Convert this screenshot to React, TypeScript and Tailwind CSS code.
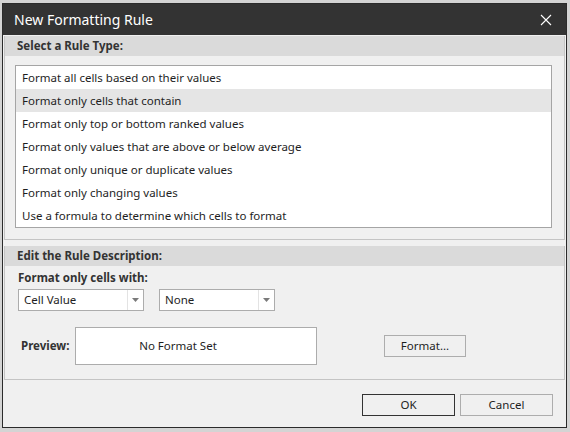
import React from 'react';

const RULE_TYPES = [
  'Format all cells based on their values',
  'Format only cells that contain',
  'Format only top or bottom ranked values',
  'Format only values that are above or below average',
  'Format only unique or duplicate values',
  'Format only changing values',
  'Use a formula to determine which cells to format',
];

const font = { fontFamily: '"Segoe UI", "Noto Sans", "Open Sans", sans-serif' };

const Dropdown: React.FC<{ value: string; width: string }> = ({ value, width }) => (
  <div className={`flex h-[22px] ${width} border border-[#acacac] bg-white`}>
    <div className="flex-1 pl-[5px] text-[11.5px] leading-[20px] text-[#1e1e1e]">{value}</div>
    <div className="flex w-[16px] items-center justify-center border-l border-[#e3e3e3]">
      <svg width="7" height="4" viewBox="0 0 7 4">
        <path d="M0 0h7L3.5 4z" fill="#7a7a7a" />
      </svg>
    </div>
  </div>
);

const SectionHeader: React.FC<{ label: string }> = ({ label }) => (
  <div className="h-[20px] bg-[#dadada] pl-[12px] text-[11.5px] font-bold leading-[20px] text-[#333]">
    {label}
  </div>
);

export default function App() {
  const selected = 1;
  return (
    <div className="h-[432px] w-[570px] overflow-hidden bg-[#d4d4d4] pl-[2px] pt-[3px]" style={font}>
      <div className="flex h-[425px] w-[565px] flex-col border border-[#2b2b2b] bg-[#f0f0f0]">
        {/* title bar */}
        <div className="flex h-[31px] items-center justify-between bg-[#333333] pl-[11px] pr-[14px]">
          <span className="text-[14px] text-white">New Formatting Rule</span>
          <svg width="12" height="12" viewBox="0 0 12 12">
            <path d="M1 1l10 10M11 1L1 11" stroke="#fff" strokeWidth="1.1" />
          </svg>
        </div>

        {/* rule type group */}
        <div className="ml-[1px] mr-[1px] mt-[1px] border border-t-0 border-[#c4c4c4]">
          <SectionHeader label="Select a Rule Type:" />
          <div className="mb-[11px] ml-[10px] mr-[12px] mt-[9px] border border-[#a5a5a5] bg-white">
            {RULE_TYPES.map((t, i) => (
              <div
                key={t}
                className={`h-[23px] pl-[6px] text-[11.5px] leading-[23px] text-[#1e1e1e] ${
                  i === selected ? 'bg-[#e5e5e5]' : ''
                }`}
              >
                {t}
              </div>
            ))}
          </div>
        </div>

        {/* description group */}
        <div className="ml-[1px] mr-[1px] mt-[6px] h-[134px] border border-t-0 border-[#c4c4c4]">
          <SectionHeader label="Edit the Rule Description:" />
          <div className="pl-[13px] pt-[3px]">
            <div className="text-[11.5px] font-bold leading-[18px] text-[#333]">Format only cells with:</div>
            <div className="mt-[2px] flex gap-[15px]">
              <Dropdown value="Cell Value" width="w-[126px]" />
              <Dropdown value="None" width="w-[116px]" />
            </div>
            <div className="mt-[16px] flex items-center">
              <span className="w-[57px] pl-[3px] text-[11.5px] font-bold text-[#333]">Preview:</span>
              <div className="flex h-[38px] w-[242px] items-center justify-center border border-[#acacac] bg-white pr-[36px] text-[11.5px] text-[#1e1e1e]">
                No Format Set
              </div>
              <button className="ml-[67px] h-[22px] w-[82px] border border-[#adadad] bg-[#f0f0f0] text-[11.5px] text-[#1e1e1e]">
                Format...
              </button>
            </div>
          </div>
        </div>

        {/* footer buttons */}
        <div className="mt-[14px] flex justify-end gap-[5px] pr-[13px]">
          <button className="h-[22px] w-[93px] border border-[#333] bg-[#f0f0f0] text-[11.5px] text-[#1e1e1e]">OK</button>
          <button className="h-[22px] w-[93px] border border-[#adadad] bg-[#f0f0f0] text-[11.5px] text-[#1e1e1e]">
            Cancel
          </button>
        </div>
      </div>
    </div>
  );
}
